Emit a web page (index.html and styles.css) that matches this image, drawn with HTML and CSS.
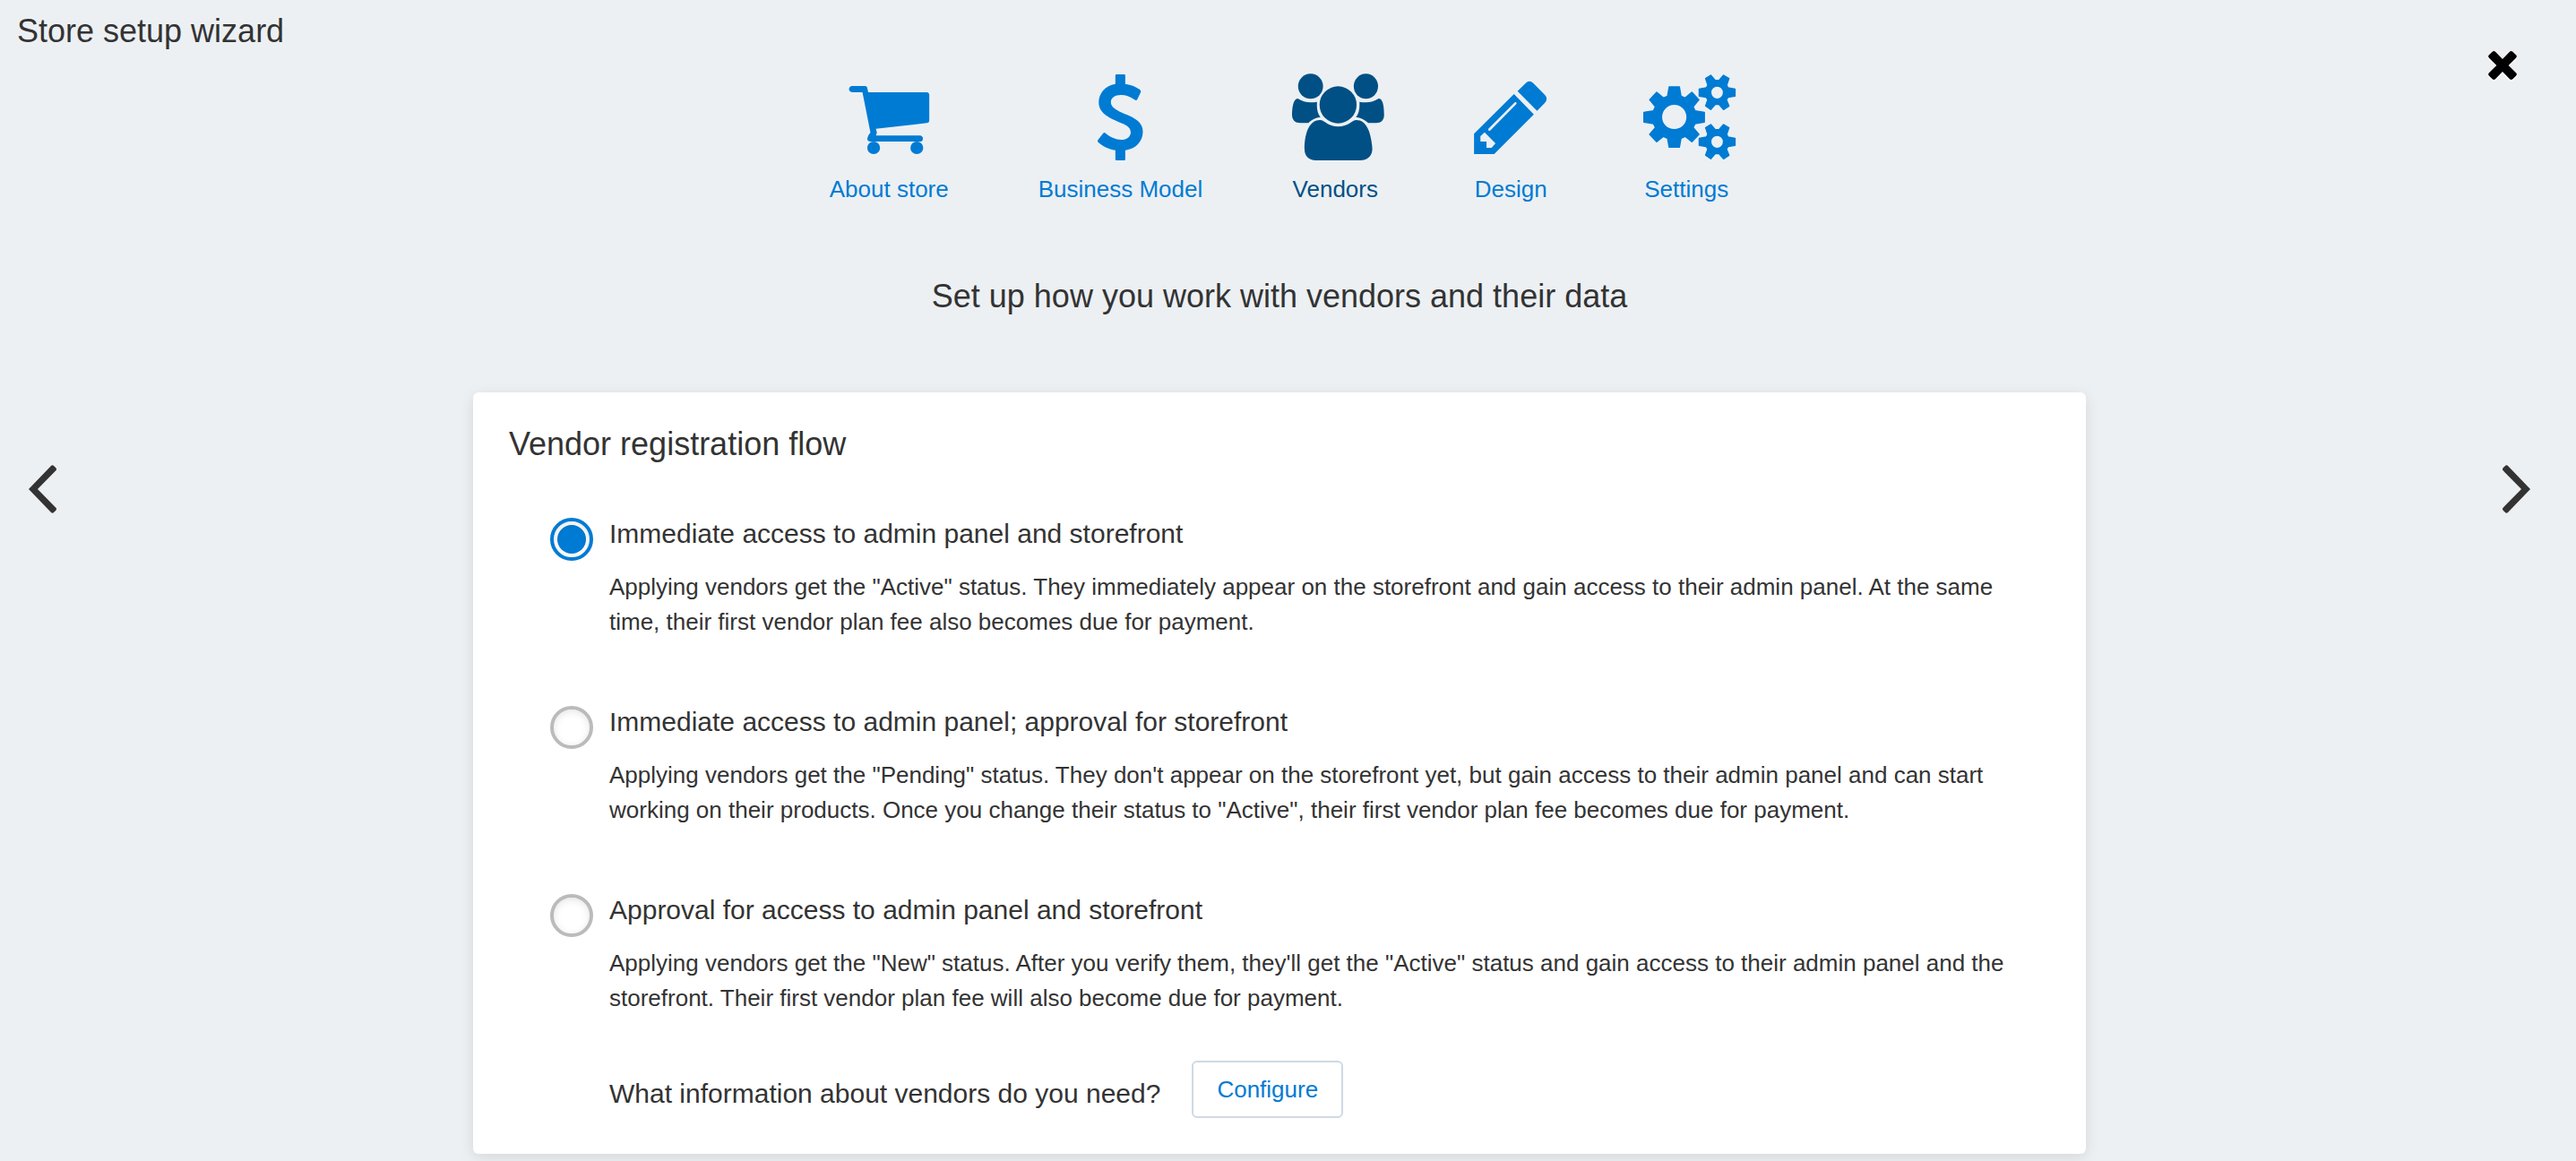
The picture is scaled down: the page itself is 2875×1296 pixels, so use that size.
FILE: index.html
```html
<!DOCTYPE html>
<html lang="en">
<head>
<meta charset="utf-8">
<title>Store setup wizard</title>
<link rel="stylesheet" href="styles.css">
</head>
<body>
<header class="header">
  <h1 class="title">Store setup wizard</h1>
  <button class="close" type="button" aria-label="Close">
    <svg viewBox="0 0 96 96" width="32" height="32"><path d="M14 2Q19 -2 24 2L48 27L72 2Q77 -2 82 2L93 13Q98 18 93 23L68 48L93 73Q98 78 93 83L82 94Q77 98 72 94L48 69L24 94Q19 98 14 94L3 83Q-2 78 3 73L28 48L3 23Q-2 18 3 13Z"/></svg>
  </button>
</header>
<main class="wizard">
  <button class="arrow arrow-prev" type="button" aria-label="Previous step">
    <svg viewBox="97 57 93 162" width="31" height="54"><path d="M97 138L172 60Q177 55 181 60L188 67Q192 72 188 76L127 138L188 200Q192 205 188 209L181 216Q177 221 172 216Z"/></svg>
  </button>
  <div class="content">
    <nav class="steps" aria-label="Setup steps">
      <a class="step" href="#about">
        <svg class="step-icon" viewBox="123 69 269 288" preserveAspectRatio="none"><path d="M143 108H184Q190 109 190 114L193 129H376Q384 130 384 138V224Q384 231 377 232L217 251L220 263Q220 268 217 274H356Q364 276 364 284Q364 294 355 294H200Q190 293 190 284Q191 274 200 264L175 129H143Q133 128 133 118Q134 109 143 108Z"/><ellipse cx="210" cy="315" rx="20" ry="21"/><ellipse cx="345" cy="315" rx="20" ry="21"/></svg>
        <span>About store</span>
      </a>
      <a class="step" href="#model">
        <svg class="step-icon" viewBox="846 69 269 288" preserveAspectRatio="none"><path d="M969 69H994Q997 69 997 73V101C1016 104 1032 111 1043 121Q1047 125 1045 130L1034 154Q1031 158 1026 154C1012 143 998 138 984 138C964 138 952 148 952 162C952 178 966 187 988 198C1020 212 1052 225 1052 261C1052 295 1028 319 997 323V353Q997 357 994 357H969Q966 357 966 353V323C945 320 925 309 912 296Q909 292 912 288L928 266Q932 262 936 267C951 280 967 288 984 288C1002 288 1014 277 1014 263C1014 246 998 237 975 228C945 214 914 198 914 163C914 131 935 106 966 101V73Q966 69 969 69Z"/></svg>
        <span>Business Model</span>
      </a>
      <a class="step step-current" href="#vendors" aria-current="step">
        <svg class="step-icon" viewBox="62 69 269 288" preserveAspectRatio="none"><ellipse cx="120" cy="109" rx="39" ry="42"/><ellipse cx="293" cy="109" rx="38" ry="42"/><ellipse cx="206" cy="171" rx="58" ry="62"/><path d="M80 150C92 158 105 163 120 163C128 163 134 162 140 161C139 185 142 200 151 212C135 214 122 222 113 232H88C72 232 62 222 62 205C62 185 65 150 80 150Z"/><path d="M333 150C321 158 308 163 293 163C285 163 279 162 273 161C274 185 271 200 262 212C278 214 291 222 300 232H325C341 232 350 222 350 205C350 185 348 150 333 150Z"/><path d="M150 222C157 222 160 225 165 229C190 249 222 249 248 229C253 225 256 222 263 222C292 222 304 255 309 285C311 297 313 310 313 319C313 342 298 357 276 357H137C114 357 101 342 101 319C101 280 110 222 150 222Z"/></svg>
        <span>Vendors</span>
      </a>
      <a class="step" href="#design">
        <svg class="step-icon" viewBox="610 69 269 288" preserveAspectRatio="none"><path fill-rule="evenodd" d="M755 135L817 203L693 336H630V268ZM663 263L650 276V294H669V315H685L697 300ZM675 251Q673 255 676 257Q679 259 682 256L762 169Q764 165 762 163Q759 161 756 164Z"/><path d="M766 125L791 99Q803 86 815 98L851 137Q862 149 853 163L827 191Z"/></svg>
        <span>Design</span>
      </a>
      <a class="step" href="#settings">
        <svg class="step-icon step-gears" viewBox="1159 69 269 288" preserveAspectRatio="none"><path d="M1240 111H1272L1277 142L1290 148L1311 129L1333 154L1315 177L1321 191L1350 196V229L1321 234L1315 247L1333 270L1311 295L1290 277L1277 283L1272 313H1240L1235 283L1222 277L1201 295L1179 270L1197 247L1191 234L1161 229V196L1191 191L1197 177L1179 154L1201 129L1222 148L1235 142ZM1256 169C1234 169 1216 188 1216 212C1216 236 1234 254 1256 254C1278 254 1296 236 1296 212C1296 188 1278 169 1256 169Z"/><path id="gear" d="M1446 118V142L1424 146L1419 154L1427 175L1410 187L1396 170H1384L1370 187L1354 175L1361 154L1356 146L1334 142V118L1356 114L1361 105L1354 83L1370 72L1384 89H1396L1410 72L1427 83L1420 105L1424 114ZM1390 108C1379 108 1370 118 1370 130C1370 142 1379 152 1390 152C1401 152 1410 142 1410 130C1410 118 1401 108 1390 108Z"/><use href="#gear" y="165"/></svg>
        <span>Settings</span>
      </a>
    </nav>
    <p class="lead">Set up how you work with vendors and their data</p>
    <section class="card">
      <h2 class="card-title" id="flow">Vendor registration flow</h2>
      <div class="options" role="radiogroup" aria-labelledby="flow">
        <div class="option">
          <input class="radio" type="radio" name="flow" id="flow-active" checked>
          <div class="option-text">
            <label class="option-title" for="flow-active">Immediate access to admin panel and storefront</label>
            <p class="option-note">Applying vendors get the "Active" status. They immediately appear on the storefront and gain access to their admin panel. At the same time, their first vendor plan fee also becomes due for payment.</p>
          </div>
        </div>
        <div class="option">
          <input class="radio" type="radio" name="flow" id="flow-pending">
          <div class="option-text">
            <label class="option-title" for="flow-pending">Immediate access to admin panel; approval for storefront</label>
            <p class="option-note">Applying vendors get the "Pending" status. They don't appear on the storefront yet, but gain access to their admin panel and can start working on their products. Once you change their status to "Active", their first vendor plan fee becomes due for payment.</p>
          </div>
        </div>
        <div class="option">
          <input class="radio" type="radio" name="flow" id="flow-new">
          <div class="option-text">
            <label class="option-title" for="flow-new">Approval for access to admin panel and storefront</label>
            <p class="option-note">Applying vendors get the "New" status. After you verify them, they'll get the "Active" status and gain access to their admin panel and the storefront. Their first vendor plan fee will also become due for payment.</p>
          </div>
        </div>
      </div>
      <div class="configure-row">
        <p class="question">What information about vendors do you need?</p>
        <button class="configure" type="button">Configure</button>
      </div>
    </section>
  </div>
  <button class="arrow arrow-next" type="button" aria-label="Next step">
    <svg viewBox="97 57 93 162" width="31" height="54"><path d="M190 138L115 60Q110 55 106 60L99 67Q95 72 99 76L160 138L99 200Q95 205 99 209L106 216Q110 221 115 216Z"/></svg>
  </button>
</main>
</body>
</html>
```
FILE: styles.css
```css
* {
  box-sizing: border-box;
}

body {
  margin: 0;
  padding: 0 19px 8px 0;
  background: #ecf0f3;
  color: #333;
  font-family: "Liberation Sans", Arial, sans-serif;
  font-size: 26px;
  line-height: 32px;
}

h1,
h2,
p {
  margin: 0;
  font-weight: normal;
}

button {
  padding: 0;
  border: 0;
  background: none;
  font: inherit;
  cursor: pointer;
}

svg {
  display: block;
}

.header {
  position: relative;
  padding: 11px 19px 0;
}

.title,
.lead,
.card-title {
  font-size: 36px;
  line-height: 48px;
}

/* The close cross hangs over the top right corner of the wizard */
.close {
  position: absolute;
  top: 57px;
  right: 47px;
  fill: #000;
  filter: drop-shadow(0 2px 0 #fff);
}

.wizard {
  display: grid;
  grid-template-columns: 63px minmax(0, 1800px) 63px;
  justify-content: space-between;
  align-items: start;
}

.arrow {
  margin-top: 460px;
  fill: #333;
}

.arrow-prev {
  justify-self: end;
}

.arrow-next {
  justify-self: start;
}

.steps {
  display: flex;
  justify-content: center;
  gap: 100px;
  margin-top: 24px;
}

.step {
  display: flex;
  flex-direction: column;
  align-items: center;
  gap: 16px;
  min-width: 96px;
  color: #007bd3;
  text-decoration: none;
}

.step-current {
  color: #005085;
}

.step-icon {
  width: 96px;
  height: 96px;
  overflow: visible;
  fill: currentColor;
}

.step-gears {
  stroke: currentColor;
  stroke-width: 4;
  stroke-linejoin: round;
}

.lead {
  margin-top: 80px;
  text-align: center;
}

.card {
  margin-top: 83px;
  padding: 34px 60px 40px 40px;
  border-radius: 6px;
  background: #fff;
  box-shadow: 0 4px 16px rgba(0, 0, 0, 0.1);
}

.options {
  display: flex;
  flex-direction: column;
  gap: 72px;
  margin-top: 56px;
  padding-left: 46px;
}

.option {
  display: flex;
  align-items: flex-start;
  gap: 18px;
}

.radio {
  appearance: none;
  flex: none;
  width: 48px;
  height: 48px;
  margin: 2px 0 0;
  padding: 4px;
  border: 4px solid #bbb;
  border-radius: 50%;
  background: #fff;
  box-shadow: inset 0 2px 8px rgba(0, 0, 0, 0.1);
}

.radio:checked {
  border-color: #007bd3;
  background: #007bd3 content-box;
}

.option-title,
.question {
  display: block;
  font-size: 30px;
  line-height: 40px;
}

.option-note {
  margin-top: 20px;
  line-height: 39px;
}

.configure-row {
  display: flex;
  align-items: flex-end;
  gap: 35px;
  margin-top: 50px;
  padding-left: 112px;
}

.question {
  padding-bottom: 7px;
}

.configure {
  height: 64px;
  padding: 0 26px;
  border: 2px solid #ced9e4;
  border-radius: 6px;
  background: #fff;
  color: #007bd3;
}
```
